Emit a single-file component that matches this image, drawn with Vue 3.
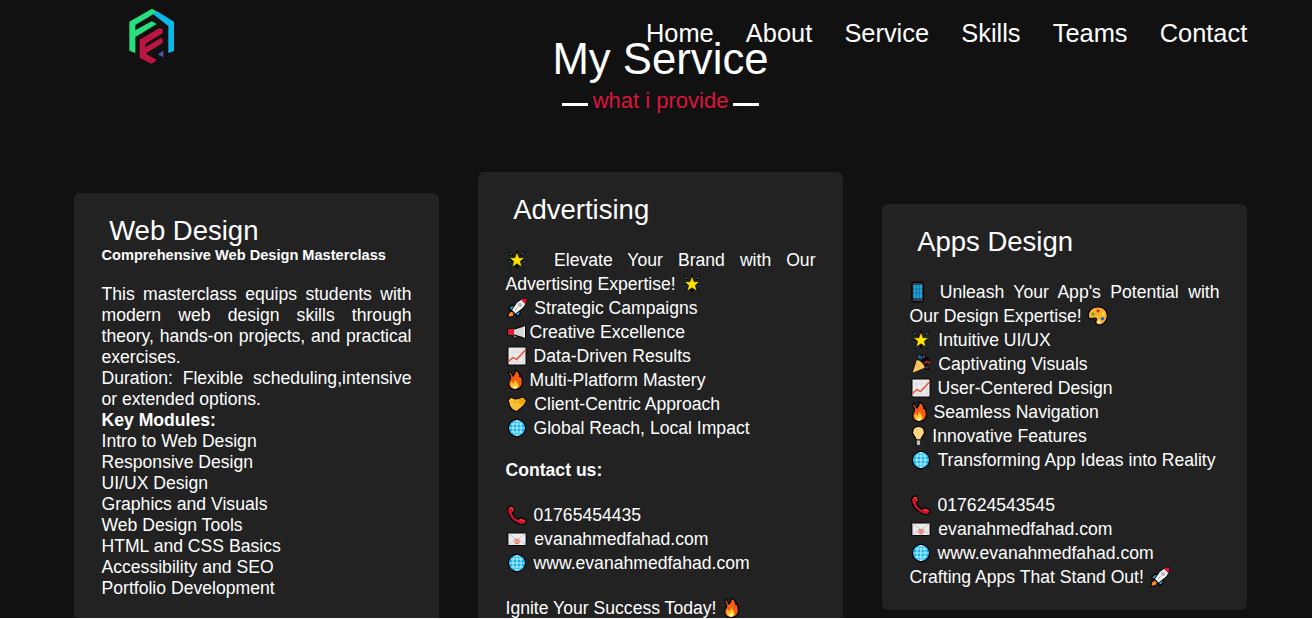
<script setup>
const nav = ['Home', 'About', 'Service', 'Skills', 'Teams', 'Contact']
const modules = [
  'Intro to Web Design', 'Responsive Design', 'UI/UX Design', 'Graphics and Visuals',
  'Web Design Tools', 'HTML and CSS Basics', 'Accessibility and SEO', 'Portfolio Development'
]
const adRows = [
  { icon: 'rocket', text: 'Strategic Campaigns', gap: 'wide' },
  { icon: 'horn', text: 'Creative Excellence', gap: 'tight' },
  { icon: 'chart', text: 'Data-Driven Results' },
  { icon: 'fire', text: 'Multi-Platform Mastery', gap: 'tight' },
  { icon: 'hands', text: 'Client-Centric Approach', gap: 'wide' },
  { icon: 'globe', text: 'Global Reach, Local Impact' }
]
const adContact = [
  { icon: 'phone', text: '01765454435' },
  { icon: 'mail', text: 'evanahmedfahad.com', gap: 'wide' },
  { icon: 'globe', text: 'www.evanahmedfahad.com' }
]
const appRows = [
  { icon: 'star', text: 'Intuitive UI/UX', gap: 'wide' },
  { icon: 'party', text: 'Captivating Visuals', gap: 'wide' },
  { icon: 'chart', text: 'User-Centered Design' },
  { icon: 'fire', text: 'Seamless Navigation', gap: 'tight' },
  { icon: 'bulb', text: 'Innovative Features', gap: 'slim' },
  { icon: 'globe', text: 'Transforming App Ideas into Reality' }
]
const appContact = [
  { icon: 'phone', text: '017624543545' },
  { icon: 'mail', text: 'evanahmedfahad.com', gap: 'wide' },
  { icon: 'globe', text: 'www.evanahmedfahad.com' }
]
</script>

<template>
  <div class="page">
    <svg class="defs" width="0" height="0">
      <symbol id="star" viewBox="0 0 22 22">
        <path d="M6 6L4 4M16 6l2-2M4.500 12L2.500 12.500M17.500 12l2 .5M6 17l-1.500 1.500M16 17l1.500 1.500M11 4V2.500M11 17v1" stroke="#000" stroke-width="2.200" stroke-linecap="round" />
        <path d="M6 6L4 4M16 6l2-2M4.500 12.300l-2 .5M17.500 12.300l2 .5M6 17l-1.500 1.500M16 17l1.500 1.500" stroke="#1b86ad" stroke-width="1" />
        <path d="M11 2.800l2.100 5.900h5.700L14.300 12.300l1.700 5.900L11 14.800 6 18.200l1.700-5.900L3.200 8.700h5.700z" fill="#ffe100" stroke="#000" stroke-width=".6" />
      </symbol>
      <symbol id="rocket" viewBox="0 0 22 22">
        <path d="M8 8.500H5L2.500 12l4 1 3 4 1.500 2.500L14 17v-3z" fill="#20aee5" stroke="#000" stroke-width="1.300" />
        <path d="M3 15.500l3-1.500 2.500 2.500-1.500 3-5.500 1z" fill="#ff8a1c" stroke="#000" stroke-width="1.100" />
        <path d="M20.500 1.500c-5 0-8 2-10.500 5L5.500 13l4 4L16 12c3-2.500 4.500-5.500 4.500-10.500z" fill="#f2f2f4" stroke="#000" stroke-width="1" />
        <path d="M20.300 1.700c-2.300 0-4 .4-5.500 1l4.500 4.500c.7-1.700 1-3.200 1-5.500z" fill="#e8112d" />
        <circle cx="14" cy="8" r="1.600" fill="#c4c6c9" stroke="#999" stroke-width=".7" />
        <path d="M9 13l2.500-2.500" stroke="#999" stroke-width="1" />
      </symbol>
      <symbol id="horn" viewBox="0 0 22 22">
        <path d="M6 13h5v4H8z" fill="#8d8d91" stroke="#000" />
        <path d="M2 8h6.500L19.500 4.500v13L8.500 14H2z" fill="#d6d6d8" stroke="#000" stroke-width="1.200" />
        <path d="M2.300 8.200H8v5.500H2.300z" fill="#ef1525" />
        <path d="M18.300 5.500v11" stroke="#f5f5f5" stroke-width="1.200" />
      </symbol>
      <symbol id="chart" viewBox="0 0 22 22">
        <path d="M2 2h18v18H2z" fill="#ececec" stroke="#000" stroke-width="1" />
        <path d="M7 2.500v17M12 2.500v17M17 2.500v17M2.500 7h17M2.500 12h17M2.500 17h17" stroke="#d4d4d7" stroke-width=".6" />
        <path d="M2.500 16.500L7 12.500l3.500 2L19.500 5" fill="none" stroke="#ed4c37" stroke-width="1.400" />
      </symbol>
      <symbol id="fire" viewBox="0 0 22 22">
        <path d="M4.500 7C2 5.500 2.500 3 4.500 2.500 5 4 6 5 7 7 8.500 5.500 9.500 3.500 9 1.200c3.500 1 4.700 3.500 4.700 6 .7.600 1 .5 1.300-.4 2.500 6 2 13.300-5.300 13.600-7.500.2-8.500-6-5.200-10.400z" fill="#f65c12" stroke="#000" stroke-width="1.200" />
        <path d="M5 17.500c-1-2.500-.3-4.500 1-5.500 0 1.500.8 2.700 2 2.500 0-1.800.8-2.500 2-3.500.5 2.500 3.500 4 2.300 6.700-2 2.600-5.800 2.500-7.300-.2z" fill="#ffc72b" />
        <path d="M7 18l1.500-1.500 1 .8 1.500-1.500c.8 2.700-.2 4-1.700 4-1.300 0-2.200-.8-2.300-1.800z" fill="#fff29a" />
      </symbol>
      <symbol id="hands" viewBox="0 0 22 22">
        <path d="M2 7l3-3 4 2L13 5.500l4-1.500 3.500 3.500L18 12.500l-7 6C7 18 4 14.500 3.500 12.500z" fill="#ffbf32" stroke="#000" stroke-width="1.100" />
        <path d="M13 6l4-1.500 2.800 3.200-2.300 4.300-4-3z" fill="#efa500" />
        <path d="M9.500 7L8 9.500c2 1 3 .3 4-.7l4.500 4M6.500 14l1.500-1.500m0 3.500l1.500-1.500" fill="none" stroke="#dc9a20" stroke-width=".8" />
      </symbol>
      <symbol id="globe" viewBox="0 0 22 22">
        <circle cx="11" cy="11" r="8.600" fill="#16b5e9" stroke="#000" stroke-width="1.200" />
        <path d="M11 3.500v15M3.500 11h15M5 7h12M5 15h12" stroke="#d5f5ff" stroke-width=".9" />
        <ellipse cx="11" cy="11" rx="4.200" ry="7.600" fill="none" stroke="#d5f5ff" stroke-width=".9" />
      </symbol>
      <symbol id="phone" viewBox="0 0 22 22">
        <path d="M3 2.500L6.500 2l2 4.500-2 2.500c1 3 3 5 5.500 6.200l3-1.700 5 2.500-.5 3.500c-2 1.500-5.500 1.500-9-.7C5.500 16 1 10.500 1.500 5z" fill="#c9142a" stroke="#000" stroke-width="1.300" />
        <path d="M4 3.700l2-.2 1.200 3M13.500 16.500l1.500-1 3.500 1.700" stroke="#f0382c" fill="none" stroke-width="1.500" />
      </symbol>
      <symbol id="mail" viewBox="0 0 22 22">
        <path d="M1.800 4.800h18.400v12.700H1.800z" fill="#ececef" stroke="#000" stroke-width="1.200" />
        <path d="M2.500 5.500l8.500 6.500 8.500-6.500M2.500 17l6-5.500M19.500 17l-6-5.500" fill="none" stroke="#bdbdc2" stroke-width=".8" />
        <circle cx="11" cy="13.500" r="2.300" fill="#ffd7d1" stroke="#ed5140" stroke-width=".9" />
        <circle cx="11" cy="13.500" r=".9" fill="#ed5140" />
      </symbol>
      <symbol id="device" viewBox="0 0 22 22">
        <rect x="2" y="1.300" width="11.500" height="19.500" rx="1.200" fill="#36424a" stroke="#000" stroke-width="1.200" />
        <path d="M3.500 4h8.500v13H3.500z" fill="#13aeea" />
        <path d="M6.300 4v13M9.200 4v13M3.500 8h8.500M3.500 12h8.500" stroke="#27607c" stroke-width=".8" />
      </symbol>
      <symbol id="palette" viewBox="0 0 22 22">
        <path d="M2 13C-.5 7 4.500 2 11 2c6 0 9.500 4 9.300 9-.2 5-4 9-8 9-4 0-4-3-3-5 .5-1.500-.3-2-1.500-2-2 0-4 1.500-5.800 0z" fill="#ffb02e" stroke="#000" stroke-width="1.200" />
        <circle cx="6" cy="9" r="1.600" fill="#3aaa35" /><circle cx="11" cy="5.800" r="1.600" fill="#e52527" />
        <circle cx="16" cy="8.700" r="1.500" fill="#ffe42e" /><circle cx="15.500" cy="13.800" r="1.700" fill="#2563d8" />
        <circle cx="12" cy="17" r="1.500" fill="#fff3d0" />
      </symbol>
      <symbol id="party" viewBox="0 0 22 22">
        <path d="M8 6l1.500-4 2 1-.5 4M12 9l4-4 2 2-2 1M15 11l4-1M14 14l4 2" stroke="#000" stroke-width="2.600" fill="none" stroke-linecap="round" />
        <path d="M8.500 6l.7-3.500 2.300 1.500-.5 2.500" stroke="#147c9d" stroke-width="1.500" fill="none" />
        <path d="M14 10.500l3-2 2 1.500 1-1" stroke="#a9222b" stroke-width="1.900" fill="none" />
        <path d="M13 5l1.500-1.500M15.500 14.500l2 .5" stroke="#7d42aa" stroke-width="1.500" />
        <path d="M6.500 6.500c4 .5 8 4.500 8.700 8.500L2 20.500z" fill="#ffc45b" stroke="#000" stroke-width=".8" />
        <path d="M6.500 11l4 5" stroke="#f3a94a" stroke-width="1" />
      </symbol>
      <symbol id="bulb" viewBox="0 0 22 22">
        <path d="M8.500 1.500C3 1.500 1 7 4 10.500c1.500 1.700 2 2.500 2 4.500h5c0-2 .5-2.800 2-4.500C16 7 14 1.500 8.500 1.500z" fill="#ffd67f" stroke="#000" stroke-width="1.100" />
        <path d="M6.300 15h4.400v4l-1 1.500H7.300l-1-1.500z" fill="#bfc1c3" stroke="#000" stroke-width=".8" />
      </symbol>
    </svg>

    <header class="header">
      <svg class="logo" viewBox="0 0 270 225">
        <path d="M58 65L126 26l15 9-14 9-51 31v16l49-27 15 8-64 39v48l-18-7z" fill="#27df7d" />
        <path d="M128 41l13-7 51 31v88l-17 6V78z" fill="#0bb9e8" />
        <path d="M89 119l60-35 9 3v13l-52 31v11l46-28 6 3v12l-49 30v3l31 18-9 8-8 3-34-18z" fill="#bb163f" />
        <path d="M144 163l16-11v20z" fill="#5556bd" />
      </svg>
      <nav class="nav"><a v-for="n in nav" :key="n">{{ n }}</a></nav>
    </header>

    <section class="services">
      <h1>My Service</h1>
      <div class="sub"><i></i><span>what i provide</span><i></i></div>

      <div class="cards">
        <article class="card web">
          <h2>&nbsp;Web Design</h2>
          <h3>Comprehensive Web Design Masterclass</h3>
          <p>This masterclass equips students with modern web design skills through theory, hands-on projects, and practical exercises.</p>
          <p>Duration: Flexible scheduling,intensive or extended options.</p>
          <p><b>Key Modules:</b></p>
          <p v-for="m in modules" :key="m">{{ m }}</p>
        </article>

        <article class="card ads">
          <h2>&nbsp;Advertising</h2>
          <p class="lead"><span class="slot lead-ad"><svg><use href="#star" /></svg></span>Elevate Your Brand with Our Advertising Expertise! <span class="slot end"><svg><use href="#star" /></svg></span></p>
          <p v-for="r in adRows" :key="r.text" class="row"><span class="slot" :class="r.gap"><svg><use :href="'#' + r.icon" /></svg></span>{{ r.text }}</p>
          <p class="contact"><b>Contact us:</b></p>
          <p v-for="r in adContact" :key="r.text" class="row"><span class="slot" :class="r.gap"><svg><use :href="'#' + r.icon" /></svg></span>{{ r.text }}</p>
          <p class="row spaced">Ignite Your Success Today! <span class="slot end"><svg><use href="#fire" /></svg></span></p>
        </article>

        <article class="card">
          <h2>&nbsp;Apps Design</h2>
          <p class="lead"><span class="slot lead-app"><svg><use href="#device" /></svg></span>Unleash Your App's Potential with Our Design Expertise! <span class="slot end"><svg><use href="#palette" /></svg></span></p>
          <p v-for="r in appRows" :key="r.text" class="row"><span class="slot" :class="r.gap"><svg><use :href="'#' + r.icon" /></svg></span>{{ r.text }}</p>
          <div class="spaced">
            <p v-for="r in appContact" :key="r.text" class="row"><span class="slot" :class="r.gap"><svg><use :href="'#' + r.icon" /></svg></span>{{ r.text }}</p>
          </div>
          <p class="row">Crafting Apps That Stand Out! <span class="slot end"><svg><use href="#rocket" /></svg></span></p>
        </article>
      </div>
    </section>
  </div>
</template>

<style>
body { margin: 0; background: #fff; overflow: hidden; }
</style>

<style scoped>
.page { position: relative; height: 618px; overflow: hidden; background: #111; color: #fff; font-family: "Liberation Sans", Arial, sans-serif; }
.defs { position: absolute; }
h1, h2, h3, p { margin: 0; font-weight: 400; }
.header { position: absolute; inset: 0 0 auto 0; display: flex; justify-content: space-between; align-items: flex-start; padding: 0 64.800px 0 110px; }
.logo { width: 90px; height: 75px; }
.nav { display: flex; gap: 32.200px; padding-top: 18px; font-size: 25.400px; line-height: 30px; }
.services { padding: 33px 65px 0 74px; }
h1 { font-size: 43.700px; line-height: 52px; text-align: center; }
.sub { display: flex; justify-content: center; gap: 5px; margin-top: 3px; font-size: 22px; line-height: 25px; color: #dc143c; }
.sub i { width: 26px; height: 3px; margin-top: 15px; background: #fff; }
.cards { display: flex; align-items: center; justify-content: space-between; margin-top: 59px; height: 470px; }
.card { box-sizing: border-box; flex: none; width: 365px; padding: 21px 27.5px; border-radius: 6px; background: #222; font-size: 17.600px; line-height: 24px; text-align: justify; }
.card h2 { padding-top: 1px; font-size: 27.500px; line-height: 32px; margin-bottom: 22px; }
.card h3 { font-size: 14.600px; line-height: 17px; font-weight: 700; margin-bottom: 20px; }
.web { line-height: 21px; padding-bottom: 22px; }
.card.web h2 { margin-bottom: 0; }
.ads { padding-bottom: 23px; }
.row { height: 24px; white-space: nowrap; }
.slot { display: inline-block; width: 28px; height: 22px; text-align: left; vertical-align: top; }
.slot svg { display: block; width: 22px; height: 22px; margin: 1px 0 0 .5px; }
.wide { width: 28.8px; }
.tight { width: 24px; }
.slim { width: 22.8px; }
.end { width: 22px; }
.lead-ad { width: 48.500px; }
.lead-app { width: 30.200px; }
.contact { line-height: 21px; margin: 20px 0 22px; }
.spaced { margin-top: 21px; }
</style>
